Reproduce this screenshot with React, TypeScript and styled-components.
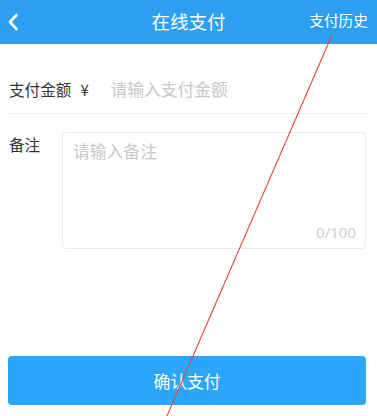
import React from "react";
import styled, { createGlobalStyle } from "styled-components";

const Global = createGlobalStyle`
  html, body { margin: 0; padding: 0; background: #fff; }
  body { font-family: "Noto Sans CJK SC", "Noto Sans", sans-serif; }
  * { box-sizing: border-box; }
`;

const Page = styled.div`
  position: relative;
  width: 377px;
  height: 416px;
  display: flex;
  flex-direction: column;
  overflow: hidden;
`;

const Header = styled.header`
  height: 44px;
  background: #2c9ff0;
  display: grid;
  grid-template-columns: 80px 1fr 80px;
  align-items: center;
  color: #fff;
`;

const Back = styled.div`
  display: flex;
  align-items: center;
  padding-left: 7px;
`;

const Title = styled.div`
  text-align: center;
  font-size: 18.5px;
  line-height: 44px;
  margin-top: -2px;
`;

const HeaderAction = styled.div`
  text-align: right;
  padding-right: 9px;
  font-size: 14.7px;
  margin-top: -6px;
`;

const Body = styled.div`
  padding: 0 11px 0 9px;
  display: flex;
  flex-direction: column;
`;

const AmountRow = styled.div`
  height: 70px;
  display: flex;
  align-items: center;
  border-bottom: 1px solid #efefef;
  padding-top: 21px;
  margin-right: -1px;
`;

const Label = styled.span`
  font-size: 15.6px;
  color: #333;
  white-space: nowrap;
`;

const Currency = styled.span`
  font-size: 15px;
  color: #333;
  margin-left: 9px;
  width: 30px;
`;

const Placeholder = styled.span<{ $size?: number }>`
  font-size: ${(p) => p.$size ?? 16.8}px;
  color: #c8c8c8;
  white-space: nowrap;
`;

const RemarkRow = styled.div`
  display: flex;
  align-items: flex-start;
  margin-top: 18px;
`;

const RemarkLabel = styled(Label)`
  width: 53px;
  margin-top: 1px;
`;

const TextBox = styled.div`
  flex: 1;
  height: 117px;
  border: 1px solid #e4ecee;
  border-radius: 4px;
  padding: 6px 10px 6px 10px;
  display: flex;
  flex-direction: column;
  justify-content: space-between;
`;

const Counter = styled.span`
  align-self: flex-end;
  font-family: "Noto Sans", sans-serif;
  font-size: 15px;
  color: #cfcfcf;
  margin-right: -1px;
`;

const Footer = styled.div`
  margin-top: auto;
  padding: 0 11px 11px 8px;
`;

const Button = styled.button`
  width: 100%;
  height: 49px;
  border: none;
  border-radius: 4px;
  background: #2ba6fa;
  color: #fff;
  font-family: inherit;
  font-size: 16.8px;
  padding: 0;
`;

const Overlay = styled.svg`
  position: absolute;
  left: 0;
  top: 0;
  pointer-events: none;
`;

export default function App() {
  return (
    <>
      <Global />
      <Page>
        <Header>
          <Back>
            <svg width="12" height="18" viewBox="0 0 12 18">
              <path d="M9.5 2 L3 9 L9.5 16" fill="none" stroke="#fff" strokeWidth="2.6" strokeLinecap="round" strokeLinejoin="round" />
            </svg>
          </Back>
          <Title>在线支付</Title>
          <HeaderAction>支付历史</HeaderAction>
        </Header>
        <Body>
          <AmountRow>
            <Label>支付金额</Label>
            <Currency>¥</Currency>
            <Placeholder>请输入支付金额</Placeholder>
          </AmountRow>
          <RemarkRow>
            <RemarkLabel>备注</RemarkLabel>
            <TextBox>
              <Placeholder>请输入备注</Placeholder>
              <Counter>0/100</Counter>
            </TextBox>
          </RemarkRow>
        </Body>
        <Footer>
          <Button>确认支付</Button>
        </Footer>
        <Overlay width="377" height="416" viewBox="0 0 377 416">
          <line x1="332" y1="35" x2="167" y2="416" stroke="#e0483e" strokeWidth="1.1" />
        </Overlay>
      </Page>
    </>
  );
}
